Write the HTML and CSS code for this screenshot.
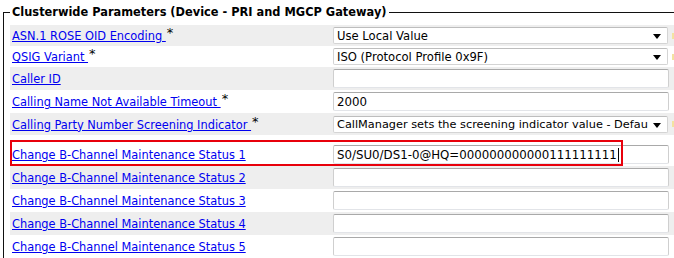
FILE: index.html
```html
<!DOCTYPE html>
<html>
<head>
<meta charset="utf-8">
<link rel="stylesheet" href="styles.css">
</head>
<body>
<fieldset class="group">
  <legend class="group-title">Clusterwide Parameters (Device - PRI and MGCP Gateway)</legend>
  <div class="rows">
    <div class="row alt short">
      <div class="label"><a href="#">ASN.1 ROSE OID Encoding </a><span class="req">*</span></div>
      <div class="select"><span class="sel-text">Use Local Value</span><svg class="arrow" width="8" height="5" viewBox="0 0 8 5"><path d="M0 0H8L4 5Z" fill="#000"/></svg></div>
      <div class="mark"></div>
    </div>
    <div class="row short">
      <div class="label"><a href="#">QSIG Variant </a><span class="req">*</span></div>
      <div class="select"><span class="sel-text">ISO (Protocol Profile 0x9F)</span><svg class="arrow" width="8" height="5" viewBox="0 0 8 5"><path d="M0 0H8L4 5Z" fill="#000"/></svg></div>
      <div class="mark"></div>
    </div>
    <div class="row alt">
      <div class="label"><a href="#">Caller ID</a></div>
      <div class="input"></div>
    </div>
    <div class="row">
      <div class="label"><a href="#">Calling Name Not Available Timeout </a><span class="req">*</span></div>
      <div class="input"><span class="in-text">2000</span></div>
    </div>
    <div class="row alt mid">
      <div class="label"><a href="#">Calling Party Number Screening Indicator </a><span class="req">*</span></div>
      <div class="select narrow"><span class="sel-text">CallManager sets the screening indicator value - Defau</span><svg class="arrow" width="8" height="5" viewBox="0 0 8 5"><path d="M0 0H8L4 5Z" fill="#000"/></svg></div>
      <div class="mark"></div>
    </div>
    <div class="row tall highlight">
      <div class="label"><a href="#">Change B-Channel Maintenance Status 1</a></div>
      <div class="input"><span class="in-text">S0/SU0/DS1-0@HQ=000000000000111111111</span><span class="caret"></span></div>
      <div class="redbox"></div>
    </div>
    <div class="row alt">
      <div class="label"><a href="#">Change B-Channel Maintenance Status 2</a></div>
      <div class="input"></div>
    </div>
    <div class="row">
      <div class="label"><a href="#">Change B-Channel Maintenance Status 3</a></div>
      <div class="input"></div>
    </div>
    <div class="row alt">
      <div class="label"><a href="#">Change B-Channel Maintenance Status 4</a></div>
      <div class="input"></div>
    </div>
    <div class="row">
      <div class="label"><a href="#">Change B-Channel Maintenance Status 5</a></div>
      <div class="input"></div>
    </div>
  </div>
</fieldset>
</body>
</html>
```

FILE: styles.css
```css
html, body {
  margin: 0;
  padding: 0;
  background: #fff;
  overflow: hidden;
}
body {
  font-family: "DejaVu Sans", Verdana, sans-serif;
  font-size: 11.4px;
  color: #000;
  width: 674px;
  height: 258px;
}
.group {
  margin: 0 0 0 3px;
  padding: 1px 0 0 6px;
  border: 0;
  border-top: 1px solid #111;
  border-left: 1px solid #111;
  width: 664px;
  min-width: 0;
}
.group-title {
  padding: 0 2px;
  font-weight: bold;
  font-size: 11.4px;
  line-height: 24px;
  color: #000;
}
.rows {
  display: flex;
  flex-direction: column;
}
.row {
  position: relative;
  display: grid;
  grid-template-columns: 323px 335px 1fr;
  align-items: center;
  height: 23px;
  background: #fff;
}
.row.alt {
  background: #eeeeee;
}
.row.short {
  height: 21px;
}
.row.mid {
  height: 22px;
}
.row.tall {
  height: 31px;
  padding-top: 8px;
  box-sizing: border-box;
}
.label {
  padding-left: 2px;
  white-space: nowrap;
}
.label a {
  color: #0000f0;
  text-decoration: underline;
}
.req {
  font-size: 13px;
  position: relative;
  top: -3px;
  margin-left: 1px;
}
.select, .input {
  box-sizing: border-box;
  background: #fff;
  border: 1px solid #cfcfcf;
  border-top-color: #a9a9a9;
  border-bottom-color: #e2e4e8;
  border-radius: 2px;
  font-size: 11.8px;
  display: flex;
  align-items: center;
  overflow: hidden;
  white-space: nowrap;
}
.select {
  height: 17px;
  width: 335px;
  padding: 0 6px 0 3px;
  border-color: #d4d4d4;
  border-top-color: #bdbdbd;
  font-size: 11.6px;
}
.select.narrow {
  font-size: 11.3px;
}
.sel-text {
  flex: 1;
}
.arrow {
  flex: none;
  margin-left: 2px;
  margin-top: 2px;
}
.input {
  height: 19px;
  width: 336px;
  padding: 0 3px;
}
.caret {
  display: inline-block;
  width: 1px;
  height: 14px;
  background: #000;
  margin-left: 1px;
}
.mark {
  justify-self: end;
  width: 2px;
  height: 6px;
  background: #f3e3a0;
}
.redbox {
  position: absolute;
  left: 0;
  top: 5px;
  width: 613px;
  height: 26px;
  box-sizing: border-box;
  border: 2px solid #e8000b;
  pointer-events: none;
}
```
